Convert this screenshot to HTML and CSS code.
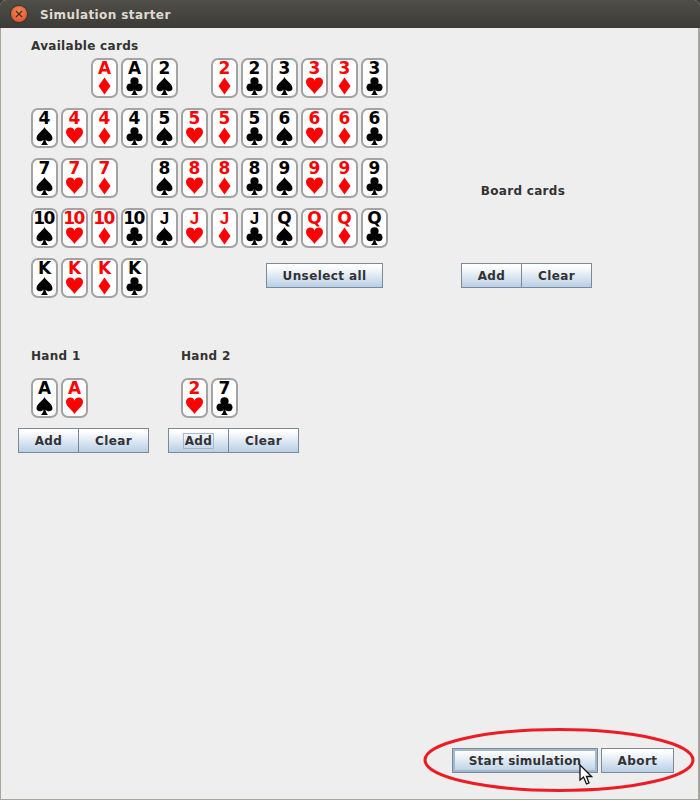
FILE: index.html
```html
<!DOCTYPE html>
<html lang="en">
<head>
  <meta charset="UTF-8" />
  <title>Simulation starter</title>
  <link rel="stylesheet" href="styles.css">
</head>
<body>
  <svg class="defs" width="0" height="0">
    <symbol id="spade" viewBox="0 0 16 18">
      <path d="M8 0C9 3.500 16 6.500 16 11.200C16 14.500 11.500 15.300 9 12.800C9.200 14.800 10 16.500 11.500 18H4.500C6 16.500 6.800 14.800 7 12.800C4.500 15.300 0 14.500 0 11.200C0 6.500 7 3.500 8 0Z"/>
    </symbol>
    <symbol id="heart" viewBox="0.5 0.5 17 18">
      <path d="M9 17.500C6 12.500 .5 10 .5 5.500C.5 2.500 2.500 1 4.800 1C6.800 1 8.400 2.200 9 4.200C9.600 2.200 11.200 1 13.200 1C15.500 1 17.500 2.500 17.500 5.500C17.500 10 12 12.500 9 17.500Z"/>
    </symbol>
    <symbol id="diamond" viewBox="0 0 16 18">
      <path d="M8 .5L14 9L8 17.500L2 9Z"/>
    </symbol>
    <symbol id="club" viewBox="0 0 16 18">
      <circle cx="8" cy="4.300" r="4.100"/>
      <circle cx="3.900" cy="10.300" r="3.900"/>
      <circle cx="12.100" cy="10.300" r="3.900"/>
      <path d="M7 7H9V13C9.200 15 10 16.800 11.500 18H4.500C6 16.800 6.800 15 7 13Z"/>
    </symbol>
  </svg>

  <div class="window">
    <header class="titlebar">
      <span class="close-btn">
        <svg viewBox="0 0 8 8" width="8" height="8"><path d="M1 1L7 7M7 1L1 7"/></svg>
      </span>
      <span class="title">Simulation starter</span>
    </header>

    <main class="content">
      <div class="top-row">
        <section class="available">
          <h2 class="label">Available cards</h2>
          <div class="card-grid">
            <div class="card red col-3"><b>A</b><svg><use href="#diamond"/></svg></div>
            <div class="card"><b>A</b><svg><use href="#club"/></svg></div>
            <div class="card"><b>2</b><svg><use href="#spade"/></svg></div>
            <div class="card red col-7"><b>2</b><svg><use href="#diamond"/></svg></div>
            <div class="card"><b>2</b><svg><use href="#club"/></svg></div>
            <div class="card"><b>3</b><svg><use href="#spade"/></svg></div>
            <div class="card red"><b>3</b><svg><use href="#heart"/></svg></div>
            <div class="card red"><b>3</b><svg><use href="#diamond"/></svg></div>
            <div class="card"><b>3</b><svg><use href="#club"/></svg></div>

            <div class="card"><b>4</b><svg><use href="#spade"/></svg></div>
            <div class="card red"><b>4</b><svg><use href="#heart"/></svg></div>
            <div class="card red"><b>4</b><svg><use href="#diamond"/></svg></div>
            <div class="card"><b>4</b><svg><use href="#club"/></svg></div>
            <div class="card"><b>5</b><svg><use href="#spade"/></svg></div>
            <div class="card red"><b>5</b><svg><use href="#heart"/></svg></div>
            <div class="card red"><b>5</b><svg><use href="#diamond"/></svg></div>
            <div class="card"><b>5</b><svg><use href="#club"/></svg></div>
            <div class="card"><b>6</b><svg><use href="#spade"/></svg></div>
            <div class="card red"><b>6</b><svg><use href="#heart"/></svg></div>
            <div class="card red"><b>6</b><svg><use href="#diamond"/></svg></div>
            <div class="card"><b>6</b><svg><use href="#club"/></svg></div>

            <div class="card"><b>7</b><svg><use href="#spade"/></svg></div>
            <div class="card red"><b>7</b><svg><use href="#heart"/></svg></div>
            <div class="card red"><b>7</b><svg><use href="#diamond"/></svg></div>
            <div class="card col-5"><b>8</b><svg><use href="#spade"/></svg></div>
            <div class="card red"><b>8</b><svg><use href="#heart"/></svg></div>
            <div class="card red"><b>8</b><svg><use href="#diamond"/></svg></div>
            <div class="card"><b>8</b><svg><use href="#club"/></svg></div>
            <div class="card"><b>9</b><svg><use href="#spade"/></svg></div>
            <div class="card red"><b>9</b><svg><use href="#heart"/></svg></div>
            <div class="card red"><b>9</b><svg><use href="#diamond"/></svg></div>
            <div class="card"><b>9</b><svg><use href="#club"/></svg></div>

            <div class="card"><b class="ten">10</b><svg><use href="#spade"/></svg></div>
            <div class="card red"><b class="ten">10</b><svg><use href="#heart"/></svg></div>
            <div class="card red"><b class="ten">10</b><svg><use href="#diamond"/></svg></div>
            <div class="card"><b class="ten">10</b><svg><use href="#club"/></svg></div>
            <div class="card"><b class="jack">J</b><svg><use href="#spade"/></svg></div>
            <div class="card red"><b class="jack">J</b><svg><use href="#heart"/></svg></div>
            <div class="card red"><b class="jack">J</b><svg><use href="#diamond"/></svg></div>
            <div class="card"><b class="jack">J</b><svg><use href="#club"/></svg></div>
            <div class="card"><b>Q</b><svg><use href="#spade"/></svg></div>
            <div class="card red"><b>Q</b><svg><use href="#heart"/></svg></div>
            <div class="card red"><b>Q</b><svg><use href="#diamond"/></svg></div>
            <div class="card"><b>Q</b><svg><use href="#club"/></svg></div>

            <div class="card"><b>K</b><svg><use href="#spade"/></svg></div>
            <div class="card red"><b>K</b><svg><use href="#heart"/></svg></div>
            <div class="card red"><b>K</b><svg><use href="#diamond"/></svg></div>
            <div class="card"><b>K</b><svg><use href="#club"/></svg></div>
            <button class="btn unselect">Unselect all</button>
          </div>
        </section>

        <section class="board">
          <h2 class="label">Board cards</h2>
          <div class="btn-group">
            <button class="btn add">Add</button>
            <button class="btn clear">Clear</button>
          </div>
        </section>
      </div>

      <div class="hands">
        <section class="hand">
          <h2 class="label">Hand 1</h2>
          <div class="hand-cards">
            <div class="card"><b>A</b><svg><use href="#spade"/></svg></div>
            <div class="card red"><b>A</b><svg><use href="#heart"/></svg></div>
          </div>
          <div class="btn-group">
            <button class="btn add">Add</button>
            <button class="btn clear">Clear</button>
          </div>
        </section>
        <section class="hand">
          <h2 class="label">Hand 2</h2>
          <div class="hand-cards">
            <div class="card red"><b>2</b><svg><use href="#heart"/></svg></div>
            <div class="card"><b>7</b><svg><use href="#club"/></svg></div>
          </div>
          <div class="btn-group">
            <button class="btn add"><span class="focus-box">Add</span></button>
            <button class="btn clear">Clear</button>
          </div>
        </section>
      </div>

      <footer class="actions">
        <button class="btn start">Start simulation</button>
        <button class="btn abort">Abort</button>
      </footer>
    </main>

    <!-- hand drawn annotation and the mouse pointer, both lie over the buttons -->
    <svg class="ellipse" viewBox="0 0 276 70" width="276" height="70">
      <ellipse cx="138" cy="35" rx="134" ry="30.500"/>
    </svg>
    <svg class="pointer" viewBox="0 0 14 21" width="14" height="21">
      <path d="M1 1V16L4.500 13L7.500 20L10 19L7.500 12.500H12.500Z"/>
    </svg>
  </div>
</body>
</html>
```

FILE: styles.css
```css
* {
  box-sizing: border-box;
}

html, body {
  margin: 0;
  padding: 0;
  height: 100%;
  overflow: hidden;
  background: #3c3b37;
}

.defs {
  position: absolute;
}

.window {
  position: relative;
  display: flex;
  flex-direction: column;
  height: 800px;
  font-family: "DejaVu Sans", sans-serif;
  color: #333;
  background: #eeeeee;
  border-left: 1px solid #a8a59e;
  border-right: 2px solid #a8a59e;
  border-bottom: 1px solid #a8a59e;
  border-radius: 6px 6px 0 0;
}

.titlebar {
  display: flex;
  align-items: center;
  height: 28px;
  margin: 0 -2px 0 -1px;
  padding-left: 11px;
  flex-shrink: 0;
  background: linear-gradient(#504e49, #3c3b37);
  border-radius: 6px 6px 0 0;
}

.close-btn {
  display: flex;
  align-items: center;
  justify-content: center;
  width: 16px;
  height: 16px;
  border-radius: 50%;
  background: radial-gradient(circle at 50% 35%, #f58a5a, #d9481f);
  box-shadow: 0 0 0 1px #35342f;
}

.close-btn path {
  fill: none;
  stroke: #4a2a1c;
  stroke-width: 1.3;
}

.title {
  margin-left: 13px;
  padding-top: 1px;
  font-size: 12px;
  font-weight: bold;
  color: #dfdbd2;
  letter-spacing: 0.4px;
}

.content {
  display: flex;
  flex: 1;
  flex-direction: column;
  padding: 0 0 0 17px;
}

.top-row {
  display: flex;
}

.label {
  margin: 0;
  font-size: 12px;
  font-weight: bold;
  line-height: 16px;
  color: #333;
  letter-spacing: 0.3px;
}

.available {
  padding: 10px 0 0 13px;
  width: 443px;
}

.card-grid {
  display: grid;
  grid-template-columns: repeat(12, 27px);
  grid-auto-rows: 40px;
  gap: 10px 3px;
  margin-top: 4px;
}

.col-3 {
  grid-column-start: 3;
}

.col-5 {
  grid-column-start: 5;
}

.col-7 {
  grid-column-start: 7;
}

.card {
  display: flex;
  flex-direction: column;
  align-items: center;
  width: 27px;
  height: 40px;
  background: #fff;
  border: 2px solid #a3a3a3;
  border-radius: 7px;
  color: #000;
  fill: #000;
}

.card.red {
  color: #f00;
  fill: #f00;
}

.card b {
  height: 17px;
  font-size: 17px;
  line-height: 17px;
}

.card b.ten {
  letter-spacing: -1.5px;
  margin-left: -2px;
}

/* the DejaVu J hangs below the baseline and runs into the suit */
.card b.jack {
  font-family: "Liberation Sans", sans-serif;
}

.card svg {
  display: block;
  width: 17px;
  height: 18px;
  flex-shrink: 0;
}

.btn {
  height: 25px;
  padding: 0;
  font-family: inherit;
  font-size: 12px;
  font-weight: bold;
  letter-spacing: 0.4px;
  color: #333;
  background: linear-gradient(#fff 10%, #b8cfe5);
  border: 1px solid #7a8a99;
}

.unselect {
  grid-column: 8 / 13;
  justify-self: end;
  width: 117px;
  margin: 5px 5px 0 0;
}

.btn-group {
  display: flex;
  width: 131px;
}

.btn-group .add {
  width: 60px;
  border-right: 0;
}

.btn-group .clear {
  width: 71px;
}

.focus-box {
  display: inline-block;
  padding: 0 1px;
  border: 1px solid #a3b8cc;
  line-height: 14px;
}

.board {
  display: flex;
  flex-direction: column;
  align-items: center;
  width: 131px;
  padding-top: 155px;
}

.board .label {
  margin-right: 7px;
}

.board .btn-group {
  margin-top: 64px;
}

.hands {
  display: flex;
  gap: 19px;
  margin-top: 50px;
}

.hand {
  width: 131px;
}

.hand .label {
  padding-left: 13px;
}

.hand-cards {
  display: flex;
  gap: 3px;
  margin: 14px 0 10px 13px;
}

.actions {
  display: flex;
  gap: 3px;
  justify-content: flex-end;
  margin-top: auto;
  padding: 0 24px 26px 0;
}

.start {
  width: 146px;
  letter-spacing: 0.2px;
  outline: 2px solid #a3b8cc;
  outline-offset: -3px;
}

.abort {
  width: 73px;
}

.ellipse {
  position: absolute;
  left: 420px;
  top: 725px;
  fill: none;
  stroke: #ed1c24;
  stroke-width: 3;
}

.pointer {
  position: absolute;
  left: 578px;
  top: 764px;
  fill: #fff;
  stroke: #111;
  stroke-width: 1.300;
}
```
